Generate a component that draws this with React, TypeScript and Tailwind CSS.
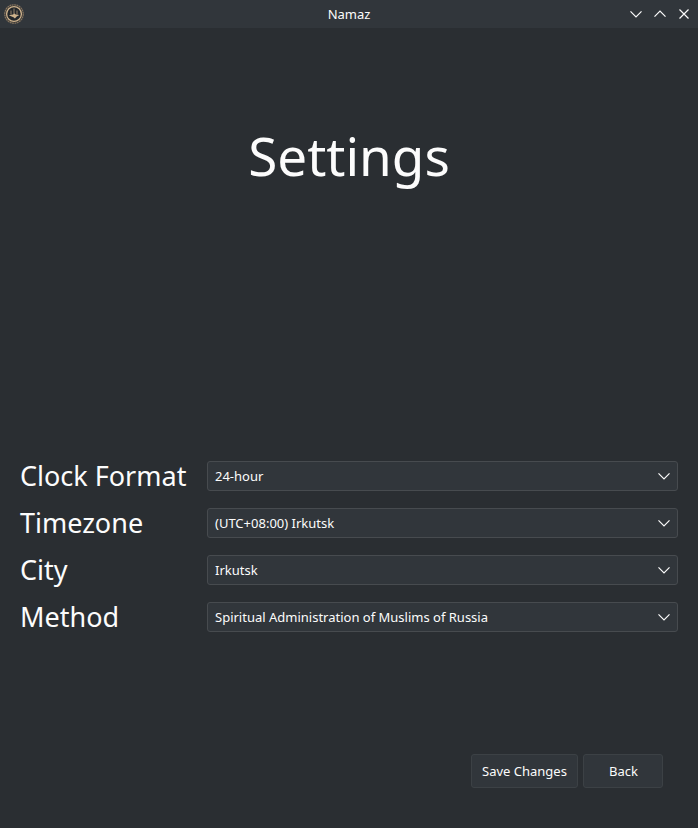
import React from "react";

const rows = [
  ["Clock Format", "24-hour"],
  ["Timezone", "(UTC+08:00) Irkutsk"],
  ["City", "Irkutsk"],
  ["Method", "Spiritual Administration of Muslims of Russia"],
];

function Chevron({ up = false }: { up?: boolean }) {
  return (
    <svg width="14" height="8" viewBox="0 0 14 8" fill="none" stroke="#fcfcfc" strokeWidth="1.2">
      <path d={up ? "M1.5 6.7 7 1.2l5.5 5.5" : "M1.5 1.3 7 6.8l5.5-5.5"} />
    </svg>
  );
}

function Emblem() {
  return (
    <svg width="20" height="20" viewBox="0 0 20 20" fill="none">
      <circle cx="10" cy="10" r="9.2" fill="#25282b" stroke="#85745f" strokeWidth="1.3" strokeDasharray="1.9 0.5" />
      <circle cx="10" cy="10" r="7.4" stroke="#d0b48e" strokeWidth="1.3" />
      <path d="M10 4.5v6M7 6.5v4M13 6.5v4" stroke="#94806a" strokeWidth="1" />
      <path d="M4.8 11.2 9 10.4l1.5-1 1.2 1.2 3.6.3-2.6 1.7-1.8 1.8-1.4-1.2z" fill="#d0b38c" />
    </svg>
  );
}

export default function App() {
  return (
    <div className="flex h-[828px] w-[698px] flex-col bg-[#2a2e32] font-['Noto_Sans',sans-serif] text-[13px] text-[#fcfcfc]">
      <header className="grid h-7 shrink-0 grid-cols-[1fr_auto_1fr] items-center bg-[#31363b] pl-1 pr-[7px]">
        <Emblem />
        <span className="pl-[3px] pt-px">Namaz</span>
        <div className="flex items-center justify-end gap-[10px]">
          <Chevron />
          <Chevron up />
          <svg width="14" height="14" viewBox="0 0 14 14" stroke="#fcfcfc" strokeWidth="1.2">
            <path d="m2.5 2.5 9 9m0-9-9 9" />
          </svg>
        </div>
      </header>
      <h1 className="mt-[91px] h-[74px] text-center text-[53px] leading-[74px]">Settings</h1>
      <main className="mt-[268px] flex flex-col gap-[17px] pl-5 pr-5">
        {rows.map(([label, value]) => (
          <div key={label} className="flex h-[30px] items-center">
            <label className="w-[187px] text-[27px] leading-[30px] whitespace-nowrap">{label}</label>
            <button className="flex h-[30px] flex-1 items-center justify-between rounded-[3px] border border-[#474b4f] bg-[#31363b] pl-[7px] pr-[6px]">
              <span className="pt-px">{value}</span>
              <Chevron />
            </button>
          </div>
        ))}
      </main>
      <footer className="mt-[122px] flex justify-end gap-[5px] pr-[35px]">
        <button className="h-[34px] w-[107px] rounded-[3px] border border-[#3c4145] bg-[#31363b] pt-0.5">Save Changes</button>
        <button className="h-[34px] w-20 rounded-[3px] border border-[#3c4145] bg-[#31363b] pl-px pt-0.5">Back</button>
      </footer>
    </div>
  );
}
